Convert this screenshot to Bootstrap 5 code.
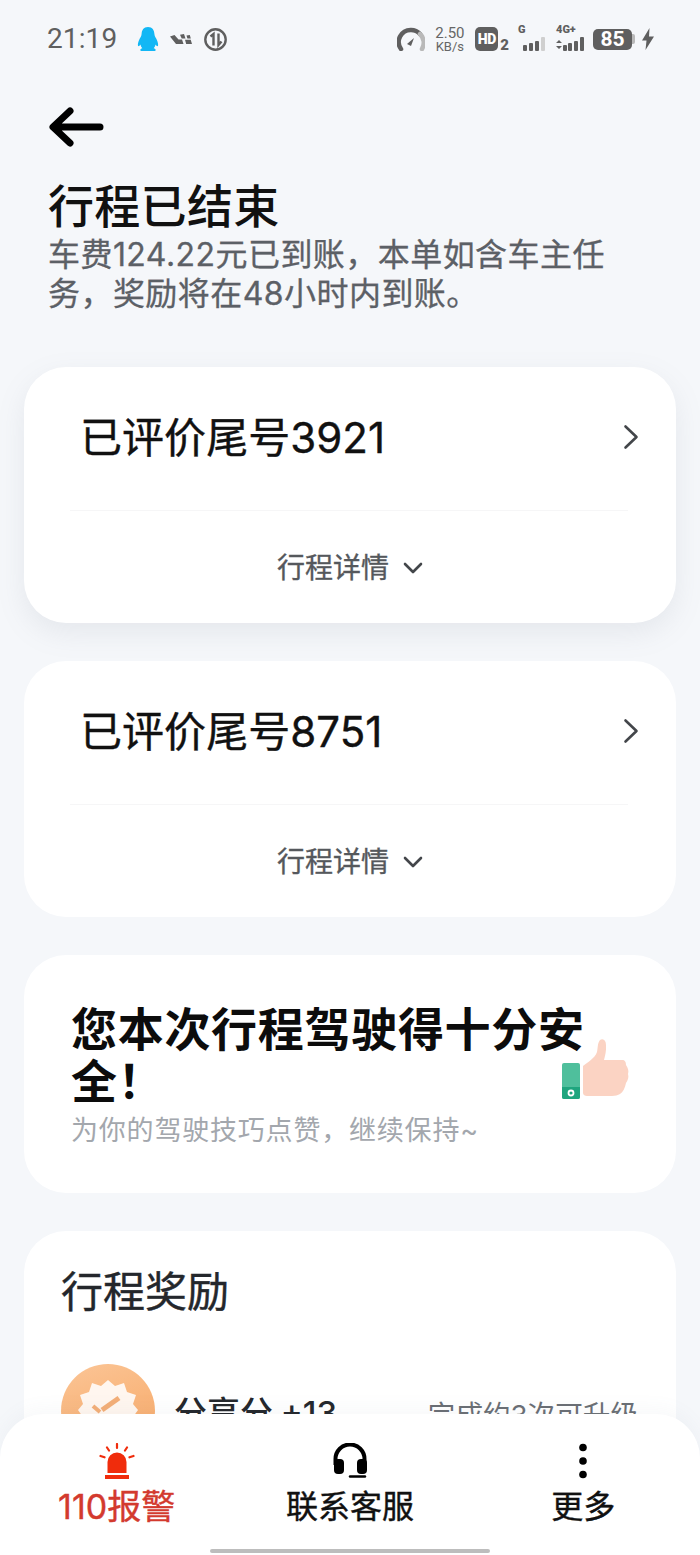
<!DOCTYPE html>
<html lang="zh-CN">
<head>
    <meta charset="UTF-8">
    <meta name="viewport" content="width=device-width, initial-scale=1.0">
    <title>行程已结束</title>
    <link rel="stylesheet" href="https://cdn.jsdelivr.net/npm/bootstrap@5.3.0/dist/css/bootstrap.min.css">
    <style>
        html, body { height: 1555px; overflow: hidden; }
        body {
            background-color: #f5f7fa;
            color: #111;
            font-family: "Inter", "Noto Sans CJK SC", sans-serif;
            position: relative;
        }
        .status-bar { height: 78px; padding: 0 46px 0 47px; color: #5f5f5f; }
        .status-time { font-size: 28px; font-weight: 400; font-family: "Roboto", sans-serif; letter-spacing: .1px; }
        .qq-icon { margin-left: 20px; }
        .logo-icon { margin-left: 11px; }
        .round-icon { margin-left: 12px; }
        .status-right { gap: 10px; }
        .speed-text { width: 29px; font-size: 13px; line-height: 13px; text-align: center; color: #666; font-family: "Roboto", sans-serif; }
        .speed-top { font-size: 15px; line-height: 14px; }
        .hd-group { margin-left: 1px; margin-right: -1px; }
        .hd-box { background: #5f5f5f; color: #fff; border-radius: 5px; width: 23px; height: 24px; font-size: 14px; font-weight: 900; line-height: 24px; text-align: center; font-family: "Roboto", sans-serif; letter-spacing: -.5px; }
        .hd-num { font-size: 15px; font-weight: 900; line-height: 1; align-self: flex-end; font-family: "Roboto", sans-serif; margin-bottom: -2px; margin-left: 2px; }
        .sig-wrap { position: relative; height: 24px; font-family: "Roboto", sans-serif; }
        .sig-label { position: absolute; left: 0; top: -3px; font-size: 11px; font-weight: 900; line-height: 12px; white-space: nowrap; }
        .sig-g { width: 28px; }
        .sig-4g { width: 29px; }
        .batt-group { margin-left: -2px; }
        .batt-box { background: #5f5f5f; color: #fff; border-radius: 5px; width: 39px; height: 21px; font-size: 21px; font-weight: 700; line-height: 21px; text-align: center; font-family: "Roboto", sans-serif; }
        .batt-tip { width: 3px; height: 10px; background: #b9b9b9; border-radius: 0 2px 2px 0; }
        .bolt-icon { margin-left: -3px; }
        .back-row { height: 98px; padding: 0 49px; }
        .head-block { padding: 0 48px; height: 191px; }
        .head-title { font-size: 46px; line-height: 60px; font-weight: 500; margin: 0; letter-spacing: .3px; }
        .head-sub { font-size: 32px; line-height: 39px; color: #5c6066; font-weight: 400; -webkit-text-stroke: .3px #5c6066; margin: -1px 0 0; width: 590px; letter-spacing: .45px; }
        .trip-card { background: #fff; border-radius: 42px; margin: 0 24px 38px; }
        .trip-raised { box-shadow: 0 10px 28px rgba(120, 130, 150, .13); }
        .trip-top { height: 143px; padding: 0 37px 3px 58px; }
        .trip-name { font-size: 42px; font-weight: 400; -webkit-text-stroke: .4px #111; color: #111; margin-left: -2px; letter-spacing: .05px; }
        .trip-rule { height: 1px; background: #f6f6f7; margin: 0 48px 0 46px; }
        .trip-more { height: 112px; padding-top: 1px; font-size: 28px; font-weight: 400; -webkit-text-stroke: .35px #55585c; color: #55585c; gap: 14px; }
        .safe-card { height: 238px; padding: 48px 47px 0; position: relative; }
        .safe-title { font-size: 46px; line-height: 52px; font-weight: 700; margin: 0; width: 530px; color: #0c0c0c; letter-spacing: .7px; }
        .safe-sub { font-size: 27px; line-height: 40px; color: #a3a7ad; margin: 4px 0 0; letter-spacing: .8px; }
        .safe-thumb { position: absolute; left: 537px; top: 82px; }
        .reward-card { height: 330px; padding: 27px 38px 0 37px; margin-bottom: 0; }
        .reward-title { font-size: 42px; line-height: 68px; font-weight: 400; -webkit-text-stroke: .4px #24272c; color: #24272c; margin: 0; }
        .reward-row { margin-top: 38px; }
        .medal { width: 94px; height: 94px; border-radius: 50%; background: linear-gradient(160deg, #fbc596, #f7a561); flex: none; }
        .reward-name { font-size: 33px; line-height: 40px; font-weight: 500; color: #24272c; margin-left: 19px; margin-top: 29px; word-spacing: -1px; }
        .reward-hint { font-size: 27.6px; line-height: 40px; color: #6a6e74; margin-top: 31px; }
        .bottom-bar {
            position: absolute; left: 0; right: 0; bottom: 0; height: 141px;
            background: #fff; border-radius: 44px 44px 0 0;
            box-shadow: 0 -6px 18px rgba(120, 130, 150, .05);
        }
        .bar-cell { padding-top: 29px; font-size: 32px; line-height: 44px; font-weight: 400; -webkit-text-stroke: .4px #111; color: #111; text-align: center; }
        .bar-cell svg { display: block; margin: 0 auto; }
        .bar-label { margin-top: 6px; }
        .bar-alert { color: #d33a2e; -webkit-text-stroke: .4px #d33a2e; font-size: 34px; }
        .home-pill { position: absolute; left: 210px; top: 135px; width: 280px; height: 4px; background: #bdbdbd; border-radius: 2px; }
    </style>
</head>
<body>

<div class="status-bar d-flex align-items-center">
    <span class="status-time">21:19</span>
    <svg class="qq-icon" width="22" height="24" viewBox="0 0 22 24">
        <path d="M11 0C6.500 0 4.800 3.300 4.600 7c-.1 2.200-1.400 3.500-2.500 6-1 2.300-1.600 5.200-1 6 .5.500 1.500-.2 2.300-1.400.3 1.500.9 2.700 1.900 3.600-1.200.4-2 1-2 1.800 0 .6.600 1 1.500 1h12.400c.9 0 1.500-.4 1.500-1 0-.8-.8-1.400-2-1.800 1-.9 1.600-2.100 1.900-3.600.8 1.200 1.800 1.900 2.300 1.400.6-.8 0-3.700-1-6-1.100-2.500-2.400-3.800-2.500-6C17.200 3.300 15.500 0 11 0z" fill="#12b7f5"/>
    </svg>
    <svg class="logo-icon" width="22" height="11" viewBox="0 0 22 11" fill="#5f5f5f">
        <path d="M0 2.500L4.500 1l4 4.500h3.500L13.500 10H6z"/>
        <path d="M10 .8L14 0l1.500 4.500h-3.800zM16.500 1.500l3.300-.5 1 3.500h-3.400zM15 5.800h5.700L22 10h-5.800z"/>
    </svg>
    <svg class="round-icon" width="23" height="23" viewBox="0 0 23 23" fill="none" stroke="#5f5f5f">
        <circle cx="11.500" cy="11.500" r="10.200" stroke-width="2.400"/>
        <path d="M6.500 8.500L9.500 6v11.500M14.500 5.500V17l3-3.500" stroke-width="2.400"/>
    </svg>
    <div class="ms-auto d-flex align-items-center status-right">
        <svg width="28" height="24" viewBox="0 0 28 24" fill="none">
            <path d="M4 22A12 12 0 0 1 14 3a12 12 0 0 1 9 4" stroke="#5f5f5f" stroke-width="4.500" stroke-linecap="round"/>
            <path d="M23 7a12 12 0 0 1 2 15" stroke="#b9b9b9" stroke-width="4.500" stroke-linecap="round"/>
            <path d="M10 17l7-6-3 8z" fill="#5f5f5f"/>
        </svg>
        <div class="speed-text"><div class="speed-top">2.50</div><div>KB/s</div></div>
        <div class="d-flex hd-group">
            <div class="hd-box">HD</div>
            <div class="hd-num">2</div>
        </div>
        <div class="sig-wrap sig-g">
            <span class="sig-label">G</span>
            <svg width="28" height="24" viewBox="0 0 28 24" fill="#5f5f5f">
                <rect x="5" y="17" width="4" height="6" rx="1"/><rect x="11" y="15" width="4" height="8" rx="1"/><rect x="17" y="13" width="4" height="10" rx="1"/><rect x="23" y="9" width="4" height="14" rx="1" fill="#cfcfcf"/>
            </svg>
        </div>
        <div class="sig-wrap sig-4g">
            <span class="sig-label">4G+</span>
            <svg width="29" height="24" viewBox="0 0 29 24" fill="#5f5f5f">
                <path d="M0 15l3-3 3 3zM0 18l3 3 3-3z"/>
                <rect x="7" y="17" width="4" height="6" rx="1"/><rect x="12" y="15" width="4" height="8" rx="1"/><rect x="18" y="13" width="4" height="10" rx="1"/><rect x="24" y="9" width="4" height="14" rx="1"/>
            </svg>
        </div>
        <div class="d-flex align-items-center batt-group">
            <div class="batt-box">85</div>
            <div class="batt-tip"></div>
        </div>
        <svg class="bolt-icon" width="12" height="22" viewBox="0 0 12 22">
            <path d="M7.500 0L0 12.500h4.500L3.500 22 12 8.500H7z" fill="#5f5f5f"/>
        </svg>
    </div>
</div>

<div class="back-row d-flex align-items-center">
    <svg width="56" height="42" viewBox="0 0 56 42" fill="none" stroke="#000" stroke-width="7" stroke-linecap="round" stroke-linejoin="round">
        <path d="M51 21H5M21 5L4 21l17 16"/>
    </svg>
</div>

<div class="head-block">
    <h1 class="head-title">行程已结束</h1>
    <p class="head-sub">车费124.22元已到账，本单如含车主任务，奖励将在48小时内到账。</p>
</div>

<div class="trip-card trip-raised">
    <div class="trip-top d-flex align-items-center justify-content-between">
        <span class="trip-name">已评价尾号3921</span>
        <svg width="16" height="26" viewBox="0 0 16 26" fill="none" stroke="#43464a" stroke-width="2.600" stroke-linecap="round" stroke-linejoin="round"><path d="M2.500 2.500L13.500 13 2.500 23.500"/></svg>
    </div>
    <div class="trip-rule"></div>
    <div class="trip-more d-flex align-items-center justify-content-center">
        <span>行程详情</span>
        <svg width="20" height="14" viewBox="0 0 20 14" fill="none" stroke="#43464a" stroke-width="2.600" stroke-linecap="round" stroke-linejoin="round"><path d="M2 3l8 8 8-8"/></svg>
    </div>
</div>

<div class="trip-card">
    <div class="trip-top d-flex align-items-center justify-content-between">
        <span class="trip-name">已评价尾号8751</span>
        <svg width="16" height="26" viewBox="0 0 16 26" fill="none" stroke="#43464a" stroke-width="2.600" stroke-linecap="round" stroke-linejoin="round"><path d="M2.500 2.500L13.500 13 2.500 23.500"/></svg>
    </div>
    <div class="trip-rule"></div>
    <div class="trip-more d-flex align-items-center justify-content-center">
        <span>行程详情</span>
        <svg width="20" height="14" viewBox="0 0 20 14" fill="none" stroke="#43464a" stroke-width="2.600" stroke-linecap="round" stroke-linejoin="round"><path d="M2 3l8 8 8-8"/></svg>
    </div>
</div>

<div class="trip-card safe-card">
    <h2 class="safe-title">您本次行程驾驶得十分安全！</h2>
    <p class="safe-sub">为你的驾驶技巧点赞，继续保持~</p>
    <svg class="safe-thumb" width="70" height="66" viewBox="0 0 70 66">
        <rect x="1" y="26" width="18" height="36" rx="2" fill="#4fbf9c"/>
        <path d="M1 50h18v10a2 2 0 0 1-2 2H3a2 2 0 0 1-2-2z" fill="#1fa57e"/>
        <circle cx="10" cy="56" r="2.500" fill="none" stroke="#fff" stroke-width="1.800"/>
        <path d="M22 29c5-4 12-8 14-14 1-5 .5-9 3-12 3-2 6 0 6 5 .5 6-1 11-2 15h18c3 0 4 2 4 5 2 3 3 6 2 9 1 3 0 6-2 9-1 5-3 9-6 11-2 1-5 2-8 2H26c-2 0-4-1-4-3z" fill="#fbd3c3"/>
    </svg>
</div>

<div class="trip-card reward-card">
    <h2 class="reward-title">行程奖励</h2>
    <div class="reward-row d-flex align-items-start">
        <div class="medal d-flex justify-content-center pt-3">
            <svg width="60" height="60" viewBox="0 0 60 60">
                <path d="M30 0l7 6 9-3 3 9 9 3-3 9 5 6-5 7 3 9-9 3-3 9-9-3-7 6-7-6-9 3-3-9-9-3 3-9-5-7 5-6-3-9 9-3 3-9 9 3z" fill="#fff6ef"/>
                <path d="M24 30l17-12" fill="none" stroke="#f3ae77" stroke-width="5"/>
                <path d="M15 26l7 6" fill="none" stroke="#f3ae77" stroke-width="4"/>
            </svg>
        </div>
        <span class="reward-name">分享分 +13</span>
        <span class="reward-hint ms-auto">完成约3次可升级</span>
    </div>
</div>

<div class="bottom-bar">
    <div class="row g-0">
        <div class="col-4 bar-cell bar-alert">
            <svg width="36" height="36" viewBox="0 0 36 36" fill="#f02c0c">
                <path d="M8.500 30v-11a9.500 9.500 0 0 1 19 0v11z"/>
                <rect x="6" y="32" width="24" height="4"/>
                <path d="M18 1v4M8 4.500l2 3M28 4.500l-2 3M1.500 13l4 1.300M34.500 13l-4 1.300" stroke="#f02c0c" stroke-width="2.200" stroke-linecap="round" fill="none"/>
            </svg>
            <div class="bar-label">110报警</div>
        </div>
        <div class="col-4 bar-cell">
            <svg width="38" height="36" viewBox="0 0 38 36" fill="none">
                <path d="M4.500 22v-6a14.500 14.500 0 0 1 29 0v6" stroke="#000" stroke-width="4"/>
                <rect x="3" y="16" width="10" height="15" rx="4" fill="#000"/>
                <rect x="26" y="16" width="10" height="15" rx="4" fill="#000"/>
                <path d="M19 33.500h15" stroke="#000" stroke-width="2.400" stroke-linecap="round"/>
            </svg>
            <div class="bar-label">联系客服</div>
        </div>
        <div class="col-4 bar-cell">
            <svg width="10" height="36" viewBox="0 0 10 36" fill="#000">
                <circle cx="5" cy="4.500" r="3.800"/><circle cx="5" cy="18" r="3.800"/><circle cx="5" cy="31.500" r="3.800"/>
            </svg>
            <div class="bar-label">更多</div>
        </div>
    </div>
    <div class="home-pill"></div>
</div>

<script src="https://cdn.jsdelivr.net/npm/bootstrap@5.3.0/dist/js/bootstrap.bundle.min.js"></script>
</body>
</html>
